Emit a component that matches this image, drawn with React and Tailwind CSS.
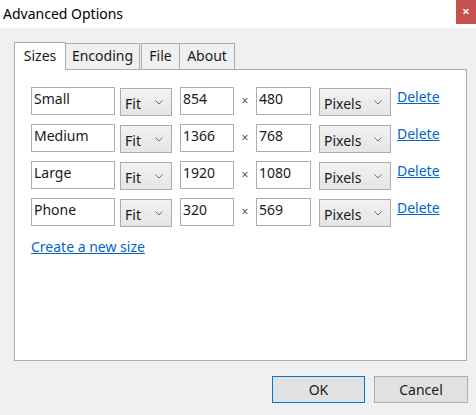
import React from 'react';

const font = { fontFamily: '"Noto Sans", "Segoe UI", sans-serif' };

const sizes = [
  { name: 'Small', w: '854', h: '480' },
  { name: 'Medium', w: '1366', h: '768' },
  { name: 'Large', w: '1920', h: '1080' },
  { name: 'Phone', w: '320', h: '569' },
];

const Chevron = () => (
  <svg width="8" height="5" viewBox="0 0 8 5" className="text-[#707070]">
    <path d="M0.5 0.5 L4 4 L7.5 0.5" fill="none" stroke="currentColor" strokeWidth="1" />
  </svg>
);

const Select = ({ value, width }) => (
  <div className={`${width} h-[28px] mt-[1px] flex items-center justify-between pl-[4px] pr-[8px] border border-[#acacac] bg-gradient-to-b from-[#f2f2f2] to-[#e5e5e5] text-[14px] text-[#1a1a1a]`}>
    <span className="pt-[2px]">{value}</span>
    <Chevron />
  </div>
);

const Field = ({ value, width }) => (
  <div className={`${width} h-[28px] border border-[#adadad] bg-white px-[2px] text-[14px] leading-[22px] text-[#1a1a1a]`}>
    {value}
  </div>
);

const SizeRow = ({ size }) => (
  <div className="h-[28px] flex items-start">
    <Field value={size.name} width="w-[84px]" />
    <div className="ml-[5px]"><Select value="Fit" width="w-[52px]" /></div>
    <div className="ml-[8px]"><Field value={size.w} width="w-[54px]" /></div>
    <span className="w-[22px] text-center text-[12px] leading-[28px] text-[#555]">×</span>
    <Field value={size.h} width="w-[55px]" />
    <div className="ml-[8px]"><Select value="Pixels" width="w-[72px]" /></div>
    <a className="ml-[6px] text-[14px] leading-[20px] text-[#0066cc] underline">Delete</a>
  </div>
);

const Tab = ({ label, active, className = '' }) => (
  <div
    className={
      active
        ? `h-[28px] border border-b-0 border-[#adadad] bg-white text-[14px] leading-[26px] text-center relative z-10 mb-[-1px] ${className}`
        : `h-[26px] border border-b-0 border-[#adadad] bg-[#f0f0f0] text-[14px] leading-[23px] text-center ${className}`
    }
  >
    {label}
  </div>
);

export default function App() {
  return (
    <div style={font} className="w-[476px] h-[415px] bg-[#f0f0f0] flex flex-col text-[#1a1a1a] overflow-hidden">
      <div className="h-[28px] bg-white flex justify-between items-start">
        <span className="pl-[3px] pt-[3px] text-[14px] text-black">Advanced Options</span>
        <div className="w-[20px] h-[24px] bg-[#c75050] flex items-center justify-center text-white text-[13px] font-bold">×</div>
      </div>

      <div className="pl-[14px] pr-[9px] pt-[14px] flex flex-col">
        <div className="flex items-end">
          <Tab label="Sizes" active className="w-[52px]" />
          <Tab label="Encoding" className="w-[74px] border-l-0" />
          <Tab label="File" className="w-[39px] ml-[1px]" />
          <Tab label="About" className="w-[55px] border-l-0" />
        </div>
        <div className="h-[292px] border border-[#adadad] bg-white pl-[16px] pt-[17px] flex flex-col">
          <div className="flex flex-col gap-[9px]">
            {sizes.map((s) => (
              <SizeRow key={s.name} size={s} />
            ))}
          </div>
          <a className="mt-[10px] text-[14px] leading-[22px] text-[#0066cc] underline">Create a new size</a>
        </div>

        <div className="mt-[15px] flex justify-end gap-[9px]">
          <button className="w-[93px] h-[27px] border border-[#0078d7] bg-[#e1e1e1] text-[14px]">OK</button>
          <button className="w-[94px] h-[27px] border border-[#adadad] bg-[#e1e1e1] text-[14px] mr-[-1px]">Cancel</button>
        </div>
      </div>
    </div>
  );
}
